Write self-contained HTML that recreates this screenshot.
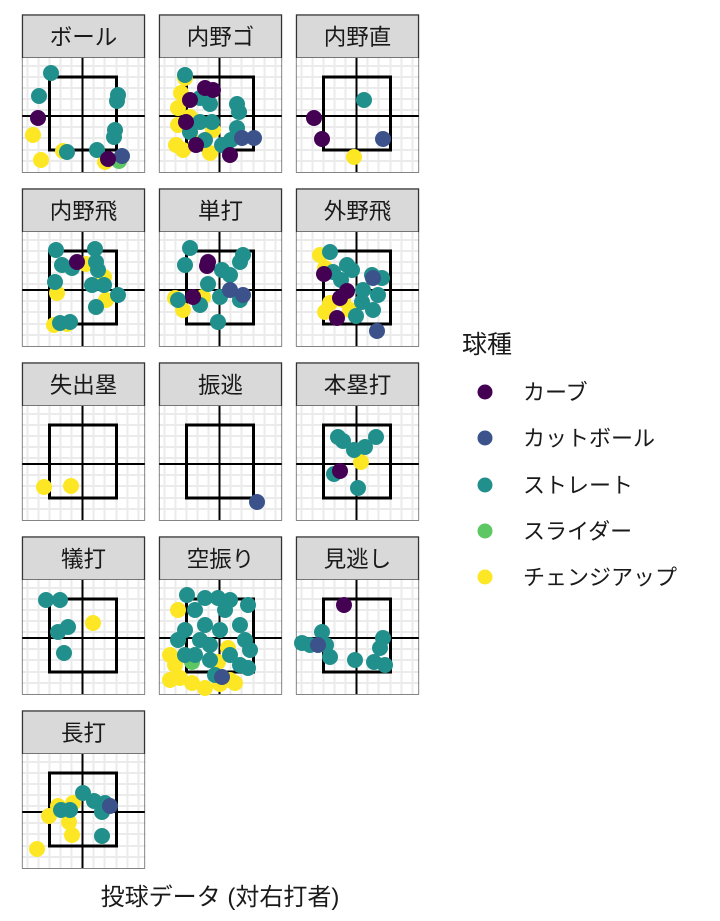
<!DOCTYPE html>
<html><head><meta charset="utf-8"><style>
html,body{margin:0;padding:0;background:#fff;width:720px;height:921px;overflow:hidden}
svg text{font-family:"Liberation Sans","Noto Sans CJK JP",sans-serif;fill:#1a1a1a}
.pts circle{r:8px}
</style></head><body>
<svg width="720" height="921" viewBox="0 0 720 921" xmlns="http://www.w3.org/2000/svg">
<defs>
<g id="pb">
 <rect x="0" y="0" width="122" height="114" fill="#fff"/>
 <g stroke="#ebebeb" stroke-width="2">
  <line x1="5" y1="0" x2="5" y2="114"/><line x1="16" y1="0" x2="16" y2="114"/><line x1="27" y1="0" x2="27" y2="114"/><line x1="38" y1="0" x2="38" y2="114"/><line x1="49" y1="0" x2="49" y2="114"/><line x1="71" y1="0" x2="71" y2="114"/><line x1="82" y1="0" x2="82" y2="114"/><line x1="94" y1="0" x2="94" y2="114"/><line x1="105" y1="0" x2="105" y2="114"/><line x1="116" y1="0" x2="116" y2="114"/>
  <line x1="0" y1="8" x2="122" y2="8"/><line x1="0" y1="19" x2="122" y2="19"/><line x1="0" y1="30" x2="122" y2="30"/><line x1="0" y1="41" x2="122" y2="41"/><line x1="0" y1="52" x2="122" y2="52"/><line x1="0" y1="69" x2="122" y2="69"/><line x1="0" y1="80" x2="122" y2="80"/><line x1="0" y1="92" x2="122" y2="92"/><line x1="0" y1="103" x2="122" y2="103"/>
 </g>
 <line x1="60" y1="0" x2="60" y2="114" stroke="#000" stroke-width="2"/>
 <line x1="0" y1="58" x2="122" y2="58" stroke="#000" stroke-width="2"/>
 <rect x="27" y="19" width="67" height="73" fill="none" stroke="#000" stroke-width="3"/>
</g>
<g id="bd"><rect x="0" y="-43" width="122" height="157" fill="none" stroke="#333" stroke-width="1.2"/><rect x="0" y="-43" width="122" height="43" fill="#d9d9d9" stroke="#333" stroke-width="1.2"/></g>
</defs>
<g font-size="22.5" text-anchor="middle">
<g transform="translate(22.5,58)"><use href="#bd"/><text x="61" y="-13">ボール</text></g>
<g transform="translate(159.5,58)"><use href="#bd"/><text x="61" y="-13">内野ゴ</text></g>
<g transform="translate(296.5,58)"><use href="#bd"/><text x="61" y="-13">内野直</text></g>
<g transform="translate(22.5,232)"><use href="#bd"/><text x="61" y="-13">内野飛</text></g>
<g transform="translate(159.5,232)"><use href="#bd"/><text x="61" y="-13">単打</text></g>
<g transform="translate(296.5,232)"><use href="#bd"/><text x="61" y="-13">外野飛</text></g>
<g transform="translate(22.5,406)"><use href="#bd"/><text x="61" y="-13">失出塁</text></g>
<g transform="translate(159.5,406)"><use href="#bd"/><text x="61" y="-13">振逃</text></g>
<g transform="translate(296.5,406)"><use href="#bd"/><text x="61" y="-13">本塁打</text></g>
<g transform="translate(22.5,580)"><use href="#bd"/><text x="61" y="-13">犠打</text></g>
<g transform="translate(159.5,580)"><use href="#bd"/><text x="61" y="-13">空振り</text></g>
<g transform="translate(296.5,580)"><use href="#bd"/><text x="61" y="-13">見逃し</text></g>
<g transform="translate(22.5,754)"><use href="#bd"/><text x="61" y="-13">長打</text></g>
</g>
<use href="#pb" x="22.5" y="58"/><use href="#pb" x="159.5" y="58"/><use href="#pb" x="296.5" y="58"/>
<use href="#pb" x="22.5" y="232"/><use href="#pb" x="159.5" y="232"/><use href="#pb" x="296.5" y="232"/>
<use href="#pb" x="22.5" y="406"/><use href="#pb" x="159.5" y="406"/><use href="#pb" x="296.5" y="406"/>
<use href="#pb" x="22.5" y="580"/><use href="#pb" x="159.5" y="580"/><use href="#pb" x="296.5" y="580"/>
<use href="#pb" x="22.5" y="754"/>
<g class="pts" stroke="none">
<g fill="#FDE725">
<circle cx="33" cy="135" r="7"/><circle cx="41" cy="160" r="7"/><circle cx="63" cy="151" r="7"/><circle cx="105" cy="162" r="7"/>
<circle cx="185" cy="78" r="7"/><circle cx="181" cy="93" r="7"/><circle cx="178" cy="108" r="7"/><circle cx="178" cy="125" r="7"/><circle cx="176" cy="145" r="7"/><circle cx="183" cy="150" r="7"/><circle cx="210" cy="153" r="7"/><circle cx="190" cy="117" r="7"/><circle cx="213" cy="130" r="7"/><circle cx="197" cy="143" r="7"/>
<circle cx="354" cy="157" r="7"/>
<circle cx="86" cy="264" r="7"/><circle cx="104" cy="277" r="7"/><circle cx="57" cy="293" r="7"/><circle cx="54" cy="325" r="7"/><circle cx="106" cy="300" r="7"/><circle cx="67" cy="324" r="7"/>
<circle cx="175" cy="298" r="7"/><circle cx="203" cy="297" r="7"/><circle cx="183" cy="310" r="7"/>
<circle cx="320" cy="255" r="7"/><circle cx="325" cy="268" r="7"/><circle cx="330" cy="303" r="7"/><circle cx="343" cy="300" r="7"/><circle cx="325" cy="312" r="7"/><circle cx="350" cy="310" r="7"/>
<circle cx="44" cy="487" r="7"/><circle cx="71" cy="486" r="7"/>
<circle cx="361" cy="462" r="7"/>
<circle cx="93" cy="623" r="7"/>
<circle cx="170" cy="680" r="7"/><circle cx="180" cy="678" r="7"/><circle cx="192" cy="683" r="7"/><circle cx="205" cy="688" r="7"/><circle cx="170" cy="655" r="7"/><circle cx="175" cy="665" r="7"/><circle cx="230" cy="680" r="7"/><circle cx="218" cy="662" r="7"/><circle cx="235" cy="683" r="7"/><circle cx="178" cy="610" r="7"/><circle cx="228" cy="648" r="7"/><circle cx="220" cy="684" r="7"/>
<circle cx="58" cy="806" r="7"/><circle cx="73" cy="803" r="7"/><circle cx="69" cy="822" r="7"/><circle cx="72" cy="835" r="7"/><circle cx="49" cy="816" r="7"/><circle cx="37" cy="849" r="7"/>
</g>
<g fill="#5DC863"><circle cx="119" cy="161" r="7"/><circle cx="192" cy="662" r="7"/></g>
<g fill="#21908C">
<circle cx="51" cy="73" r="7"/><circle cx="39" cy="96" r="7"/><circle cx="118" cy="95" r="7"/><circle cx="117" cy="101" r="7"/><circle cx="115" cy="130" r="7"/><circle cx="114" cy="137" r="7"/><circle cx="67" cy="152" r="7"/><circle cx="97" cy="150" r="7"/>
<circle cx="185" cy="75" r="7"/><circle cx="200" cy="98" r="7"/><circle cx="210" cy="104" r="7"/><circle cx="237" cy="104" r="7"/><circle cx="239" cy="112" r="7"/><circle cx="200" cy="122" r="7"/><circle cx="212" cy="122" r="7"/><circle cx="237" cy="128" r="7"/><circle cx="231" cy="140" r="7"/><circle cx="205" cy="140" r="7"/><circle cx="222" cy="145" r="7"/><circle cx="190" cy="132" r="7"/>
<circle cx="364" cy="100" r="7"/>
<circle cx="56" cy="250" r="7"/><circle cx="95" cy="249" r="7"/><circle cx="62" cy="265" r="7"/><circle cx="72" cy="268" r="7"/><circle cx="96" cy="262" r="7"/><circle cx="55" cy="282" r="7"/><circle cx="92" cy="285" r="7"/><circle cx="104" cy="285" r="7"/><circle cx="118" cy="295" r="7"/><circle cx="96" cy="307" r="7"/><circle cx="70" cy="322" r="7"/><circle cx="60" cy="323" r="7"/><circle cx="98" cy="270" r="7"/>
<circle cx="190" cy="248" r="7"/><circle cx="243" cy="255" r="7"/><circle cx="240" cy="262" r="7"/><circle cx="185" cy="265" r="7"/><circle cx="222" cy="270" r="7"/><circle cx="208" cy="284" r="7"/><circle cx="220" cy="297" r="7"/><circle cx="200" cy="305" r="7"/><circle cx="218" cy="322" r="7"/><circle cx="240" cy="300" r="7"/><circle cx="230" cy="275" r="7"/><circle cx="178" cy="300" r="7"/>
<circle cx="330" cy="252" r="7"/><circle cx="347" cy="265" r="7"/><circle cx="333" cy="272" r="7"/><circle cx="352" cy="270" r="7"/><circle cx="372" cy="275" r="7"/><circle cx="382" cy="278" r="7"/><circle cx="378" cy="295" r="7"/><circle cx="363" cy="290" r="7"/><circle cx="373" cy="310" r="7"/><circle cx="341" cy="280" r="7"/><circle cx="362" cy="302" r="7"/><circle cx="356" cy="316" r="7"/>
<circle cx="338" cy="437" r="7"/><circle cx="343" cy="441" r="7"/><circle cx="365" cy="447" r="7"/><circle cx="376" cy="437" r="7"/><circle cx="354" cy="450" r="7"/><circle cx="358" cy="488" r="7"/><circle cx="334" cy="474" r="7"/>
<circle cx="46" cy="600" r="7"/><circle cx="60" cy="600" r="7"/><circle cx="68" cy="627" r="7"/><circle cx="58" cy="632" r="7"/><circle cx="64" cy="653" r="7"/>
<circle cx="187" cy="595" r="7"/><circle cx="205" cy="598" r="7"/><circle cx="218" cy="598" r="7"/><circle cx="230" cy="600" r="7"/><circle cx="248" cy="605" r="7"/><circle cx="195" cy="610" r="7"/><circle cx="205" cy="625" r="7"/><circle cx="185" cy="630" r="7"/><circle cx="220" cy="630" r="7"/><circle cx="240" cy="625" r="7"/><circle cx="245" cy="640" r="7"/><circle cx="210" cy="645" r="7"/><circle cx="230" cy="655" r="7"/><circle cx="195" cy="655" r="7"/><circle cx="210" cy="660" r="7"/><circle cx="240" cy="665" r="7"/><circle cx="250" cy="650" r="7"/><circle cx="178" cy="640" r="7"/><circle cx="200" cy="640" r="7"/><circle cx="225" cy="610" r="7"/><circle cx="185" cy="655" r="7"/><circle cx="215" cy="675" r="7"/><circle cx="248" cy="668" r="7"/>
<circle cx="322" cy="632" r="7"/><circle cx="326" cy="645" r="7"/><circle cx="330" cy="657" r="7"/><circle cx="310" cy="645" r="7"/><circle cx="355" cy="660" r="7"/><circle cx="383" cy="638" r="7"/><circle cx="380" cy="648" r="7"/><circle cx="374" cy="662" r="7"/><circle cx="385" cy="665" r="7"/><circle cx="302" cy="643" r="7"/>
<circle cx="83" cy="793" r="7"/><circle cx="94" cy="801" r="7"/><circle cx="105" cy="803" r="7"/><circle cx="102" cy="812" r="7"/><circle cx="61" cy="810" r="7"/><circle cx="102" cy="836" r="7"/><circle cx="70" cy="810" r="7"/>
</g>
<g fill="#3B528B">
<circle cx="122" cy="156" r="7"/><circle cx="242" cy="138" r="7"/><circle cx="254" cy="138" r="7"/><circle cx="383" cy="139" r="7"/>
<circle cx="230" cy="290" r="7"/><circle cx="243" cy="295" r="7"/><circle cx="373" cy="278" r="7"/><circle cx="377" cy="331" r="7"/>
<circle cx="257" cy="502" r="7"/><circle cx="318" cy="645" r="7"/><circle cx="110" cy="806" r="7"/><circle cx="222" cy="677" r="7"/>
</g>
<g fill="#440154">
<circle cx="38" cy="118" r="7"/><circle cx="108" cy="159" r="7"/>
<circle cx="205" cy="88" r="7"/><circle cx="213" cy="90" r="7"/><circle cx="190" cy="100" r="7"/><circle cx="196" cy="145" r="7"/><circle cx="230" cy="155" r="7"/><circle cx="186" cy="122" r="7"/>
<circle cx="314" cy="118" r="7"/><circle cx="322" cy="139" r="7"/>
<circle cx="77" cy="262" r="7"/><circle cx="208" cy="262" r="7"/><circle cx="207" cy="266" r="7"/><circle cx="193" cy="297" r="7"/>
<circle cx="324" cy="274" r="7"/><circle cx="340" cy="298" r="7"/><circle cx="337" cy="318" r="7"/><circle cx="347" cy="291" r="7"/>
<circle cx="340" cy="471" r="7"/><circle cx="344" cy="605" r="7"/>
</g>
</g>
<text x="462" y="353" font-size="25">球種</text>
<g font-size="22">
<circle cx="485" cy="392" r="7.5" fill="#440154"/><text x="523" y="400">カーブ</text>
<circle cx="485" cy="438" r="7.5" fill="#3B528B"/><text x="523" y="446">カットボール</text>
<circle cx="485" cy="485" r="7.5" fill="#21908C"/><text x="523" y="493">ストレート</text>
<circle cx="485" cy="531" r="7.5" fill="#5DC863"/><text x="523" y="539">スライダー</text>
<circle cx="485" cy="577" r="7.5" fill="#FDE725"/><text x="523" y="585">チェンジアップ</text>
</g>
<text x="220" y="905" font-size="24" text-anchor="middle">投球データ (対右打者)</text>
</svg>
</body></html>
